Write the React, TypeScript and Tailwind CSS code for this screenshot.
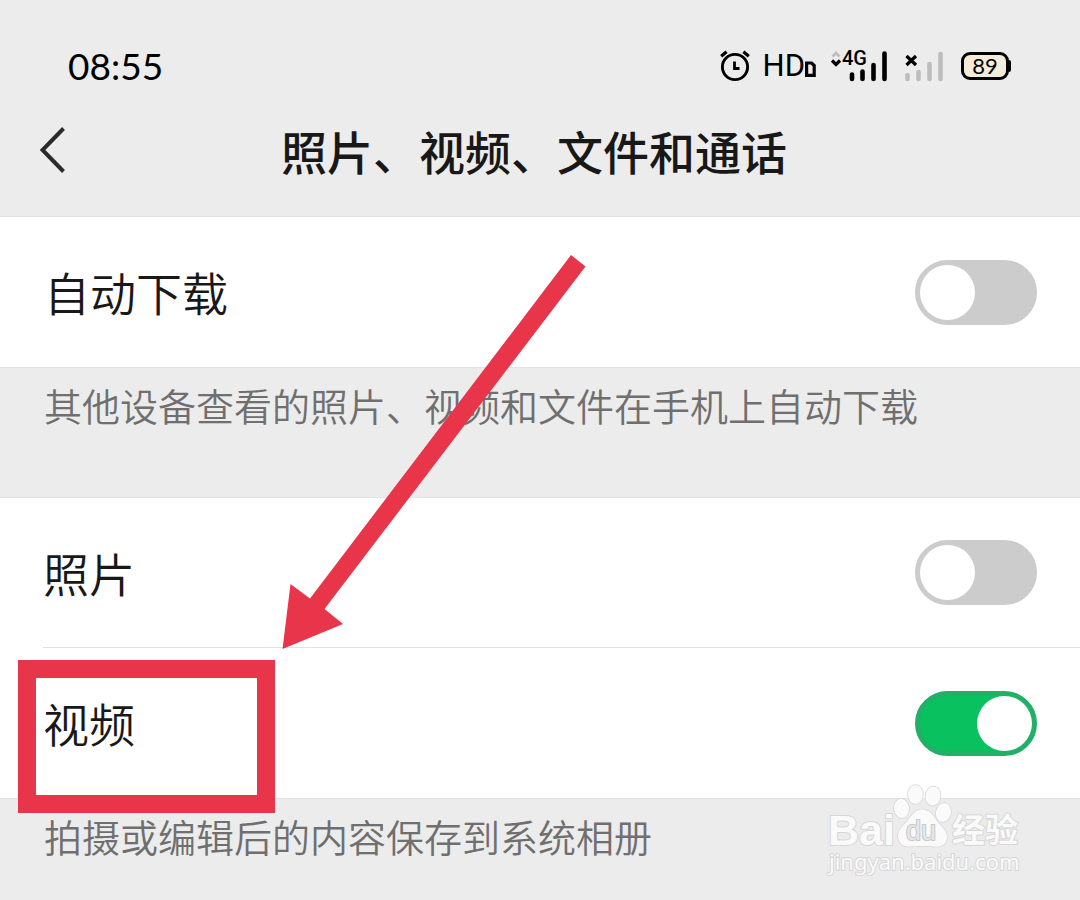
import { useId, useState } from "react";

function Toggle({ id, initial }: { id: string; initial: boolean }) {
  const [on, setOn] = useState(initial);
  return (
    <input
      id={id}
      type="checkbox"
      role="switch"
      checked={on}
      onChange={(e) => setOn(e.target.checked)}
      className="h-[65px] w-[122px] shrink-0 cursor-pointer appearance-none rounded-full border-[5px] border-[#cccccc] bg-[#cccccc] before:block before:size-[55px] before:rounded-full before:bg-white before:content-[''] checked:border-[#22b068] checked:bg-[#0ac160] checked:before:translate-x-[57px]"
    />
  );
}

function SettingRow({ label, on = false }: { label: string; on?: boolean }) {
  const id = useId();
  return (
    <div className="flex h-[150px] items-center justify-between pr-[43px]">
      <label htmlFor={id} className="pb-[2px] text-[46px] font-[350] leading-[64px] text-[#181818]">
        {label}
      </label>
      <Toggle id={id} initial={on} />
    </div>
  );
}

function StatusBar() {
  return (
    <div className="flex h-9 items-center justify-between pl-[68px] pr-[69px] text-black">
      <time className="font-['Lato',sans-serif] text-[37px] leading-9">08:55</time>
      <div className="flex items-center">
        <svg width="30" height="32" viewBox="0 0 30 32" fill="none" stroke="currentColor" aria-hidden="true">
          <circle cx="15" cy="17" r="12.6" strokeWidth="2.9" />
          <path d="M14.5 11.5V18.5H19.5" strokeWidth="2.8" />
          <path d="M1.2 6.2L6.6 1.8M23.4 1.8L28.8 6.2" strokeWidth="3.2" />
        </svg>
        <div className="ml-[13px] flex items-center">
          <span className="font-['Roboto',sans-serif] text-[31px] leading-9">HD</span>
          <svg width="11" height="36" viewBox="0 0 11 36" fill="none" stroke="currentColor" aria-hidden="true">
            <path d="M1.600 15H6.600L9.200 17.500V27.400H1.600Z" strokeWidth="3.2" />
          </svg>
        </div>
        <div className="relative ml-[14px] h-9 w-[58px]">
          <svg width="58" height="36" viewBox="0 0 58 36" fill="none" aria-hidden="true">
            <path d="M2.500 8.500L6 5L9.500 8.500" stroke="#bdbdbd" strokeWidth="2.8" />
            <path d="M2 12.500L6 16.500L10 12.500" stroke="#000" strokeWidth="3.2" />
            <path d="M22 26.500V31M32.500 23.500V31M43.500 17V31M54.500 5.500V31" stroke="#000" strokeWidth="4.6" strokeLinecap="round" />
          </svg>
          <span className="absolute left-[12px] top-0 font-['Roboto',sans-serif] text-[20px] font-medium leading-5">
            4G
          </span>
        </div>
        <svg className="ml-4" width="39" height="36" viewBox="0 0 39 36" fill="none" aria-hidden="true">
          <path d="M3.500 27V31M14.500 24V31M25.500 16V31M36.500 6V31" stroke="#bdbdbd" strokeWidth="4.6" strokeLinecap="round" />
          <path d="M2.500 8L12 17M12 8L2.500 17" stroke="#000" strokeWidth="3.2" />
        </svg>
        <div className="ml-[18px] flex items-center">
          <span className="flex h-7 w-12 items-center justify-center rounded-[9px] border-[3px] border-black bg-[#f4ecd8] font-['Lato',sans-serif] text-[22px] leading-5">
            89
          </span>
          <span className="h-3 w-[2px] rounded-r bg-black" />
        </div>
      </div>
    </div>
  );
}

function Watermark() {
  return (
    <svg
      className="absolute left-[822px] top-[780px]"
      width="206"
      height="100"
      viewBox="0 0 206 100"
      fill="#fafafa"
      stroke="#d6d6d6"
      strokeWidth="2"
      strokeLinejoin="round"
      paintOrder="stroke"
    >
      <text x="6" y="65" fontFamily="Liberation Sans, sans-serif" fontWeight="700" fontSize="43">
        Bai
      </text>
      <g strokeWidth="1.5">
        <ellipse cx="79.500" cy="28.500" rx="7.500" ry="9.500" transform="rotate(-8 79.500 28.500)" />
        <ellipse cx="93.500" cy="14.500" rx="7.500" ry="9.500" />
        <ellipse cx="111" cy="16" rx="7.500" ry="9.500" transform="rotate(8 111 16)" />
        <ellipse cx="121.500" cy="32.500" rx="7.500" ry="9.500" transform="rotate(12 121.500 32.500)" />
        <path d="M100 29.500C108 29.500 111 35 115 41C120 47 125 51 125 57C125 64 120 66.500 115 66.500C109 66.500 106 66 100 66C94 66 91 66.500 86 66.500C80 66.500 76 62 76 56C76 50 81 46 86 40C90 35 93 29.500 100 29.500Z" />
      </g>
      <text x="84" y="60" fontFamily="Liberation Sans, sans-serif" fontSize="27" fill="#e6e6e6" stroke="#c8c8c8">
        du
      </text>
      <text x="130" y="62" fontFamily="Noto Sans CJK SC, sans-serif" fontWeight="700" fontSize="33">
        经验
      </text>
      <text x="7" y="90" fontFamily="Noto Sans, sans-serif" fontSize="22">
        jingyan.baidu.com
      </text>
    </svg>
  );
}

export default function App() {
  return (
    <div className="relative min-h-screen overflow-hidden bg-[#ececec] font-['Noto_Sans_CJK_SC',sans-serif]">
      <header className="border-b border-[#e2e2e2] pt-12">
        <StatusBar />
        <div className="grid h-[132px] grid-cols-[1fr_auto_1fr] items-center pr-3">
          <button type="button" aria-label="返回" className="ml-10 w-[26px] cursor-pointer">
            <svg width="26" height="48" viewBox="0 0 26 48" fill="none" stroke="#2b2b2b" strokeWidth="4" aria-hidden="true">
              <path d="M23.500 2.500L2.500 24L23.500 45.500" />
            </svg>
          </button>
          <h1 className="text-[46px] font-medium leading-[64px] text-[#181818]">照片、视频、文件和通话</h1>
        </div>
      </header>
      <main>
        <section className="bg-white pl-11">
          <SettingRow label="自动下载" />
        </section>
        <p className="h-[131px] border-y border-[#e2e2e2] px-11 pt-[11px] text-[38px] font-[350] leading-[52px] text-[#6f6f6f]">
          其他设备查看的照片、视频和文件在手机上自动下载
        </p>
        <section className="divide-y divide-[#e2e2e2] bg-white pl-[43px]">
          <SettingRow label="照片" />
          <SettingRow label="视频" on />
        </section>
        <p className="border-t border-[#e2e2e2] px-11 pt-[11px] text-[38px] font-[350] leading-[52px] text-[#6f6f6f]">
          拍摄或编辑后的内容保存到系统相册
        </p>
      </main>
      <div className="pointer-events-none absolute left-[18px] top-[660px] h-[153px] w-[257px] border-[18px] border-[#e93549]" />
      <svg
        className="pointer-events-none absolute left-[282px] top-[255px]"
        width="304"
        height="395"
        viewBox="0 0 304 395"
        aria-hidden="true"
      >
        <path d="M289 0L303.500 11.500L42.500 354L61 369L0.500 394L8.500 329L28 343.500Z" fill="#e93549" />
      </svg>
      <Watermark />
    </div>
  );
}
